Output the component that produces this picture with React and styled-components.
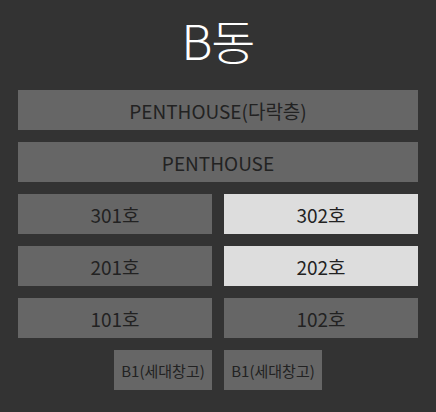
import React from "react";
import styled, { createGlobalStyle } from "styled-components";

const Global = createGlobalStyle`
  html, body {
    margin: 0;
    padding: 0;
    background: #333333;
  }
  body {
    font-family: "Noto Sans CJK KR", "Noto Sans", sans-serif;
  }
`;

const Page = styled.div`
  width: 436px;
  height: 412px;
  box-sizing: border-box;
  padding: 0 18px;
  display: flex;
  flex-direction: column;
  gap: 12px;
`;

const Title = styled.h1`
  margin: 0;
  height: 78px;
  display: flex;
  align-items: center;
  justify-content: center;
  color: #ffffff;
  font-size: 48px;
  font-weight: 300;
  letter-spacing: -1px;
`;

const Grid = styled.div`
  display: grid;
  grid-template-columns: 1fr 1fr;
  gap: 12px;
`;

const Unit = styled.div`
  grid-column: ${(p) => (p.$wide ? "1 / -1" : "auto")};
  height: 40px;
  display: flex;
  align-items: center;
  justify-content: center;
  background: ${(p) => (p.$active ? "#dddddd" : "#666666")};
  color: #222222;
  font-size: 19px;
  font-weight: 400;
`;

const BasementRow = styled.div`
  display: flex;
  justify-content: center;
  gap: 12px;
`;

const Storage = styled.div`
  width: 98px;
  height: 40px;
  display: flex;
  align-items: center;
  justify-content: center;
  background: #666666;
  color: #222222;
  font-size: 15px;
`;

const floors = [
  { label: "PENTHOUSE(다락층)", wide: true },
  { label: "PENTHOUSE", wide: true },
  { label: "301호" },
  { label: "302호", active: true },
  { label: "201호" },
  { label: "202호", active: true },
  { label: "101호" },
  { label: "102호" },
];

export default function App() {
  return (
    <>
      <Global />
      <Page>
        <Title>B동</Title>
        <Grid>
          {floors.map((f, i) => (
            <Unit key={i} $wide={f.wide} $active={f.active}>
              {f.label}
            </Unit>
          ))}
        </Grid>
        <BasementRow>
          <Storage>B1(세대창고)</Storage>
          <Storage>B1(세대창고)</Storage>
        </BasementRow>
      </Page>
    </>
  );
}
